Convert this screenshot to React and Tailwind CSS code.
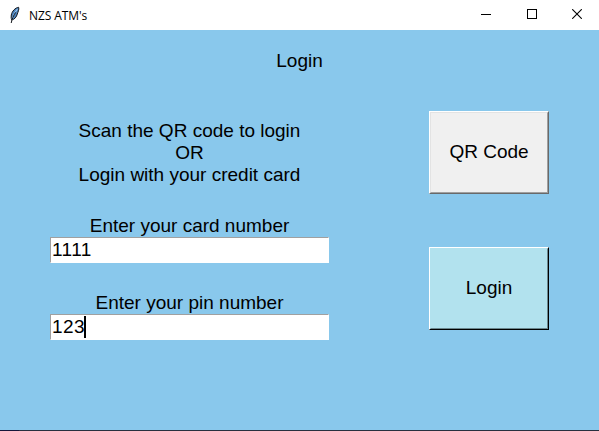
const TITLE_FONT = "font-['Open_Sans','Noto_Sans',sans-serif]";

function Feather() {
  return (
    <svg width="16" height="18" viewBox="0 0 16 18" className="shrink-0">
      <path d="M11.6 1.3 C8.2 1.8 5 5.2 4.3 9 C4 11 4.1 12.8 4.6 14 C7.5 13.6 9.6 10.8 10.3 8 C10.9 6 12.4 3.4 11.6 1.3 Z" fill="#4a82bd" stroke="#15181d" strokeWidth="1" />
      <path d="M10.4 3 C8 6 6 9.5 5 13.5" stroke="#9cc8ee" strokeWidth="1.1" fill="none" />
      <path d="M8.6 6.4 C6.6 9.5 5 12.8 4.2 17" stroke="#15181d" strokeWidth="1" fill="none" />
    </svg>
  );
}

function TitleBar() {
  return (
    <header className="flex h-[30px] items-center bg-white pl-[7px]">
      <Feather />
      <span className={`ml-[6px] text-[12px] leading-[15px] tracking-[-0.1px] ${TITLE_FONT}`}>NZS ATM's</span>
      <div className="ml-auto flex h-full">
        <button className="flex w-[46px] justify-center pt-[9px]" aria-label="Minimize">
          <svg width="10" height="10" shapeRendering="crispEdges"><path d="M0 5.5H10" stroke="#000" /></svg>
        </button>
        <button className="flex w-[45px] justify-center pt-[9px]" aria-label="Maximize">
          <svg width="10" height="10" shapeRendering="crispEdges"><rect x=".5" y=".5" width="9" height="9" fill="none" stroke="#000" /></svg>
        </button>
        <button className="flex w-[45px] justify-center pt-[9px]" aria-label="Close">
          <svg width="10" height="10"><path d="M.2 .2L9.8 9.8M9.8 .2L.2 9.8" stroke="#000" strokeWidth="1.1" /></svg>
        </button>
      </div>
    </header>
  );
}

function Entry({ label, value, caret }) {
  return (
    <div className="flex w-[279px] flex-col">
      <div className="h-[22px] text-center leading-[22px]">{label}</div>
      <div className="flex h-[26px] items-center border border-t-[#a0a0a0] border-r-white border-b-white border-l-[#a0a0a0] bg-white pl-px">
        <span className="leading-[22px] tracking-[0.43px]">{value}</span>
        {caret && <span className="-ml-px h-[22px] w-[2px] bg-black" />}
      </div>
    </div>
  );
}

export default function App() {
  return (
    <div className="flex h-[431px] w-[599px] flex-col overflow-hidden bg-[#89c8ec] font-['Liberation_Sans',Arial,sans-serif] text-[19px] text-black">
      <TitleBar />
      <main className="flex h-[400px] flex-col">
        <h1 className="mt-[20px] text-center leading-[22px]">Login</h1>
        <div className="flex">
          <section className="ml-[50px] flex w-[279px] flex-col pt-[48px]">
            <p className="text-center leading-[22px]">
              Scan the QR code to login
              <br />
              OR
              <br />
              Login with your credit card
            </p>
            <div className="mt-[29px]"><Entry label="Enter your card number" value="1111" /></div>
            <div className="mt-[29px]"><Entry label="Enter your pin number" value="123" caret /></div>
          </section>
          <section className="ml-[100px] flex w-[120px] flex-col gap-[53px] pt-[39px]">
            <button className="h-[83px] border border-t-white border-r-[#696969] border-b-[#696969] border-l-white bg-[#f0f0f0]">
              <span className="flex h-full items-center justify-center border border-t-[#e3e3e3] border-r-[#a0a0a0] border-b-[#a0a0a0] border-l-[#e3e3e3]">QR Code</span>
            </button>
            <button className="h-[83px] border border-t-white border-r-black border-b-black border-l-white bg-[#b2e2ee]">
              <span className="flex h-full items-center justify-center border border-t-[#b2e2ee] border-r-[#6a878e] border-b-[#6a878e] border-l-[#b2e2ee]">Login</span>
            </button>
          </section>
        </div>
      </main>
      <footer className="flex h-px">
        <div className="w-[19px] bg-[#16163a]" />
        <div className="flex-1 bg-[#28303f]" />
      </footer>
    </div>
  );
}
